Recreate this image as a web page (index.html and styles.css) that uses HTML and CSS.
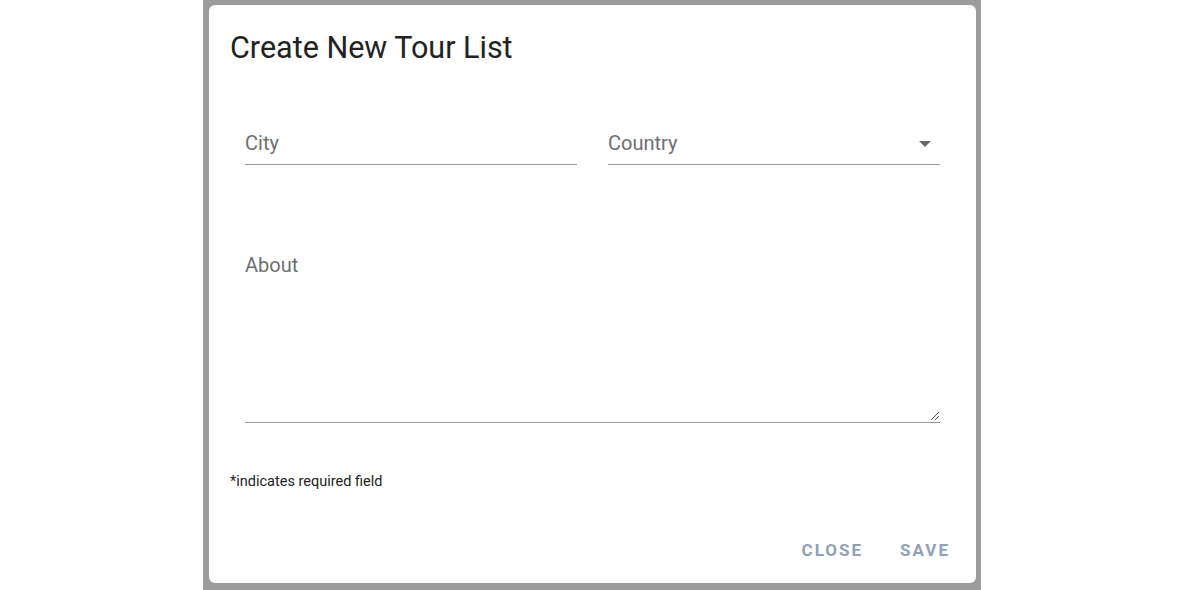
FILE: index.html
```html
<!DOCTYPE html>
<html>
<head>
<meta charset="utf-8">
<link rel="stylesheet" href="styles.css">
</head>
<body>
<div class="stage">
  <div class="overlay">
    <div class="dialog">
      <h1 class="title">Create New Tour List</h1>
      <div class="form">
        <div class="row">
          <div class="field">
            <span class="label">City</span>
          </div>
          <div class="field select">
            <span class="label">Country</span>
            <svg class="caret" width="12" height="6" viewBox="0 0 12 6"><path d="M0 0h12L6 6z" fill="#666"/></svg>
          </div>
        </div>
        <div class="field area">
          <span class="label">About</span>
          <svg class="grip" width="10" height="10" viewBox="0 0 10 10"><path d="M1 9L9 1M5 9L9 5" stroke="#555" stroke-width="1"/></svg>
        </div>
      </div>
      <p class="note">*indicates required field</p>
      <div class="actions">
        <button class="btn">CLOSE</button>
        <button class="btn">SAVE</button>
      </div>
    </div>
  </div>
</div>
</body>
</html>
```
FILE: styles.css
```css
html, body {
  margin: 0;
  padding: 0;
  background: #fff;
  font-family: Roboto, "Liberation Sans", sans-serif;
}
.stage {
  width: 1187px;
  height: 590px;
  display: flex;
  justify-content: flex-start;
}
.overlay {
  margin-left: 203px;
  width: 778px;
  height: 590px;
  background: #9b9b9c;
  box-sizing: border-box;
  padding: 5px 5px 7px 6px;
  display: flex;
}
.dialog {
  flex: 1;
  background: #fff;
  border-radius: 6px;
  box-sizing: border-box;
  padding: 28px 21px 0 21px;
  display: flex;
  flex-direction: column;
}
.title {
  margin: 0;
  font-size: 30.5px;
  font-weight: 400;
  color: #222;
  line-height: 30px;
  letter-spacing: 0;
}
.form {
  padding: 0 15px 0 15px;
  margin-top: 58px;
}
.row {
  display: flex;
  gap: 31px;
}
.field {
  flex: 1;
  height: 44px;
  border-bottom: 1px solid #8f98a3;
  position: relative;
  box-sizing: border-box;
}
.label {
  font-size: 20px;
  color: #6d6f73;
  line-height: 22px;
  display: block;
  padding-top: 11px;
}
.caret {
  position: absolute;
  right: 9px;
  top: 20px;
}
.area {
  margin-top: 78px;
  height: 180px;
  border-bottom-color: #9a9a9a;
}
.grip {
  position: absolute;
  right: 0;
  bottom: 1px;
}
.note {
  margin: 50px 0 0 0;
  font-size: 14.5px;
  color: #222;
  line-height: 18px;
}
.actions {
  display: flex;
  justify-content: flex-end;
  gap: 37px;
  margin-top: 49px;
  padding-right: 5px;
}
.btn {
  background: none;
  border: none;
  padding: 0;
  font-family: Roboto, "Liberation Sans", sans-serif;
  font-weight: 700;
  font-size: 17px;
  letter-spacing: 2px;
  color: #8fa1b4;
  line-height: 20px;
}
```
